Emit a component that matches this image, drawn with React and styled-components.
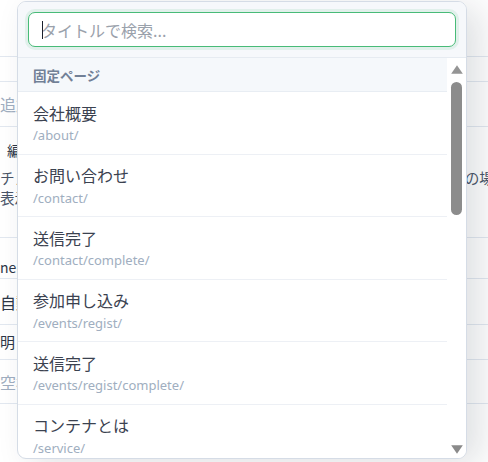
import React from "react";
import styled, { createGlobalStyle } from "styled-components";

const Global = createGlobalStyle`
  html, body { margin: 0; padding: 0; background: #ffffff; }
  body { font-family: "Noto Sans", "Noto Sans CJK JP", sans-serif; color: #2d3748; }
  * { box-sizing: border-box; }
`;

const Page = styled.div`
  position: relative;
  width: 488px;
  height: 462px;
  overflow: hidden;
  background: #ffffff;
`;

const FormRow = styled.div`
  height: ${(p) => p.$h}px;
  border-bottom: 1px solid #e2e8f0;
  display: flex;
  flex-direction: column;
  justify-content: ${(p) => p.$justify || "center"};
  padding: ${(p) => p.$pad || "0"};
  white-space: nowrap;
`;

const BgText = styled.div`
  font-family: "Noto Sans CJK JP", sans-serif;
  font-size: ${(p) => p.$size || 14}px;
  line-height: ${(p) => p.$lh || 20}px;
  color: ${(p) => p.$color || "#2d3748"};
  padding-left: ${(p) => p.$indent || 0}px;
  margin-top: ${(p) => p.$mt || 0}px;
`;

const Dropdown = styled.div`
  position: absolute;
  left: 17px;
  top: 1px;
  width: 450px;
  height: 458px;
  background: #ffffff;
  border: 1px solid #d5dce6;
  border-radius: 9px;
  box-shadow: 14px 6px 34px rgba(30, 41, 59, 0.14);
  display: flex;
  flex-direction: column;
  overflow: hidden;
`;

const SearchBar = styled.div`
  flex: none;
  padding: 10px 10px;
  background: #f6f8fb;
  border-bottom: 1px solid #e6ebf1;
`;

const InputWrap = styled.div`
  position: relative;
  &::after {
    content: "";
    position: absolute;
    left: 14px;
    top: 9px;
    width: 1px;
    height: 18px;
    background: #1a202c;
  }
`;

const SearchInput = styled.input`
  display: block;
  width: 100%;
  height: 35px;
  border: 1.5px solid #48bb78;
  border-radius: 7px;
  padding: 0 12px;
  font-family: "Noto Sans CJK JP", sans-serif;
  font-size: 16px;
  color: #2d3748;
  background: #ffffff;
  outline: none;
  box-shadow: 0 0 0 3px rgba(72, 187, 120, 0.12);
  caret-color: transparent;
  &::placeholder { color: #9aa1ab; }
`;

const ListArea = styled.div`
  flex: 1;
  min-height: 0;
  display: flex;
`;

const Scroller = styled.div`
  flex: 1;
  min-width: 0;
  overflow: hidden;
`;

const ScrollbarTrack = styled.div`
  flex: none;
  width: 19px;
  background: #ffffff;
  display: flex;
  flex-direction: column;
  align-items: flex-start;
  padding: 7px 3px 4px 3.5px;
`;

const Arrow = styled.svg`
  display: block;
  flex: none;
  width: 12px;
  height: 9px;
  margin-top: ${(p) => p.$mt || "0"};
`;

const Thumb = styled.div`
  width: 11px;
  height: 133px;
  margin-top: 8px;
  margin-left: 0.5px;
  border-radius: 6px;
  background: #8c8c8c;
`;

const GroupHeader = styled.div`
  height: 34px;
  display: flex;
  align-items: center;
  padding: 0 15px;
  background: #f5f8fb;
  border-bottom: 1px solid #e8edf3;
  font-family: "Noto Sans CJK JP", sans-serif;
  font-size: 13.5px;
  font-weight: 700;
  color: #718096;
`;

const Item = styled.div`
  padding: 8.5px 15px 9.6px;
  border-bottom: 1px solid #edf0f5;
  cursor: pointer;
  &:hover { background: #f8fafc; }
`;

const Title = styled.div`
  font-family: "Noto Sans CJK JP", sans-serif;
  font-size: 16px;
  line-height: 24px;
  color: #3b4250;
`;

const Slug = styled.div`
  margin-top: 1.5px;
  font-family: "Noto Sans", "Noto Sans CJK JP", sans-serif;
  font-size: 13px;
  line-height: 18px;
  color: #a0aec0;
`;

const groups = [
  {
    name: "固定ページ",
    items: [
      ["会社概要", "/about/"],
      ["お問い合わせ", "/contact/"],
      ["送信完了", "/contact/complete/"],
      ["参加申し込み", "/events/regist/"],
      ["送信完了", "/events/regist/complete/"],
      ["コンテナとは", "/service/"],
      ["サービス一覧", "/service/list/"],
      ["料金プラン", "/price/"],
      ["よくある質問", "/faq/"],
      ["採用情報", "/recruit/"],
      ["プライバシーポリシー", "/privacy/"],
      ["利用規約", "/terms/"],
      ["サイトマップ", "/sitemap/"],
      ["お知らせ", "/news/"],
      ["導入事例", "/cases/"],
      ["アクセス", "/access/"],
    ],
  },
];

export default function App() {
  return (
    <Page>
      <Global />
      <FormRow $h={57} />
      <FormRow $h={25} />
      <FormRow $h={45}>
        <BgText $size={16} $color="#a0aec0">追加するタグを入力</BgText>
      </FormRow>
      <FormRow $h={111} $justify="flex-start" $pad="13px 0 0 0">
        <BgText $indent={7}>編集者への表示設定</BgText>
        <BgText $size={14.6} $color="#4a5568" $mt={8}>
          チェックを入れると、記事の一覧ページにも表示されます。未チェックの場合は非表示
        </BgText>
        <BgText $size={14.6} $color="#4a5568">表示されます。</BgText>
      </FormRow>
      <FormRow $h={41} $justify="flex-end" $pad="0 0 1px 0">
        <BgText $size={14}>ner</BgText>
      </FormRow>
      <FormRow $h={46}>
        <BgText $size={16}>自動生成</BgText>
      </FormRow>
      <FormRow $h={35}>
        <BgText $size={15}>明</BgText>
      </FormRow>
      <FormRow $h={44}>
        <BgText $size={16} $color="#a0aec0">空欄の場合</BgText>
      </FormRow>

      <Dropdown>
        <SearchBar>
          <InputWrap>
            <SearchInput autoFocus placeholder="タイトルで検索..." />
          </InputWrap>
        </SearchBar>
        <ListArea>
          <Scroller>
            {groups.map((g) => (
              <div key={g.name}>
                <GroupHeader>{g.name}</GroupHeader>
                {g.items.map(([t, s], i) => (
                  <Item key={i}>
                    <Title>{t}</Title>
                    <Slug>{s}</Slug>
                  </Item>
                ))}
              </div>
            ))}
          </Scroller>
          <ScrollbarTrack>
            <Arrow viewBox="0 0 12 9">
              <path d="M6 0.3 L11.8 8.7 L0.2 8.7 Z" fill="#959595" />
            </Arrow>
            <Thumb />
            <Arrow viewBox="0 0 12 9" $mt="auto">
              <path d="M0.2 0.3 L11.8 0.3 L6 8.7 Z" fill="#8a8a8a" />
            </Arrow>
          </ScrollbarTrack>
        </ListArea>
      </Dropdown>
    </Page>
  );
}
